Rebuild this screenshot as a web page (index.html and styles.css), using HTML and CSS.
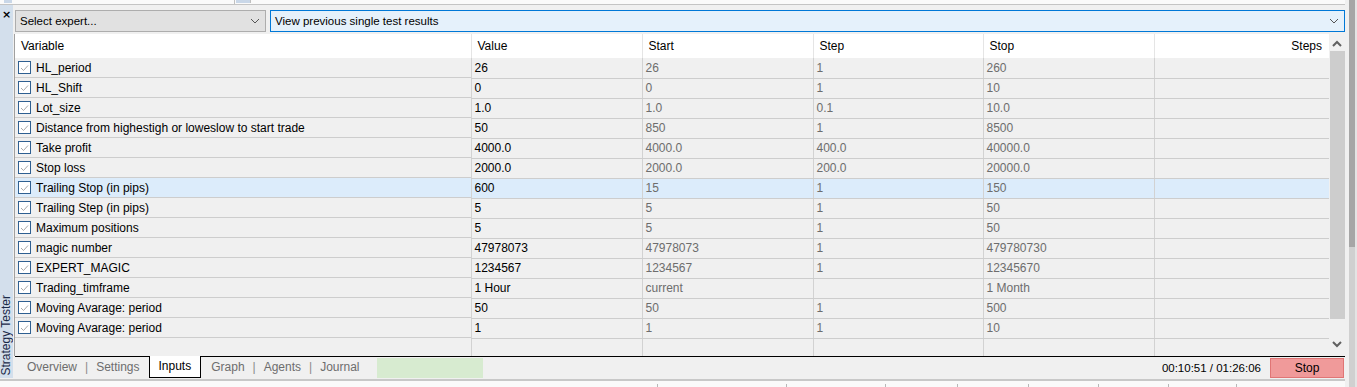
FILE: index.html
```html
<!DOCTYPE html>
<html lang="en">
<head>
    <meta charset="UTF-8">
    <title>Strategy Tester</title>
    <link rel="stylesheet" href="styles.css">
</head>
<body>
    <div class="app">
        <div class="top-strip">
            <span class="stub stub-a"></span>
            <span class="stub-gap"></span>
            <span class="stub stub-b"></span>
        </div>

        <div class="frame">
            <div class="sidebar">
                <span class="close">&times;</span>
                <span class="side-title">Strategy Tester</span>
            </div>

            <div class="panel">
                <div class="toolbar">
                    <div class="combo expert">
                        <span>Select expert...</span>
                        <svg class="chev" width="10" height="6" viewBox="0 0 10 6"><polyline points="1,1 5,5 9,1" fill="none" stroke="#555" stroke-width="1"/></svg>
                    </div>
                    <div class="combo mode">
                        <span>View previous single test results</span>
                        <svg class="chev" width="10" height="6" viewBox="0 0 10 6"><polyline points="1,1 5,5 9,1" fill="none" stroke="#555" stroke-width="1"/></svg>
                    </div>
                </div>

                <div class="grid-wrap">
                    <div class="grid">
                        <table class="inputs">
                            <colgroup>
                                <col style="width:456px">
                                <col style="width:171px">
                                <col style="width:171px">
                                <col style="width:170px">
                                <col style="width:171px">
                                <col style="width:175px">
                            </colgroup>
                            <thead>
                                <tr>
                                    <th>Variable</th>
                                    <th>Value</th>
                                    <th>Start</th>
                                    <th>Step</th>
                                    <th>Stop</th>
                                    <th class="right">Steps</th>
                                </tr>
                            </thead>
                            <tbody id="rows"></tbody>
                        </table>
                    </div>
                    <div class="vscroll">
                        <svg width="10" height="7" viewBox="0 0 10 7"><polyline points="1,6 5,2 9,6" fill="none" stroke="#606060" stroke-width="2"/></svg>
                        <div class="thumb"></div>
                        <svg width="10" height="7" viewBox="0 0 10 7"><polyline points="1,1 5,5 9,1" fill="none" stroke="#606060" stroke-width="2"/></svg>
                    </div>
                </div>

                <div class="tabbar">
                    <span class="tab">Overview</span>
                    <span class="sep">|</span>
                    <span class="tab">Settings</span>
                    <span class="tab active">Inputs</span>
                    <span class="tab">Graph</span>
                    <span class="sep">|</span>
                    <span class="tab">Agents</span>
                    <span class="sep">|</span>
                    <span class="tab">Journal</span>
                    <div class="progress"></div>
                    <span class="timer">00:10:51 / 01:26:06</span>
                    <button class="stop">Stop</button>
                </div>
            </div>
        </div>

        <div class="bottom-strip">
            <span style="width:657px"></span>
            <span style="width:128px"></span>
            <span style="width:98px"></span>
            <span style="width:71px"></span>
            <span style="width:70px"></span>
            <span style="width:69px"></span>
            <span style="width:69px"></span>
            <span style="width:67px"></span>
        </div>
    </div>
    <div class="outer-scroll"><div class="outer-thumb"></div></div>

    <script>
        const inputs = [
            ['HL_period', '26', '26', '1', '260'],
            ['HL_Shift', '0', '0', '1', '10'],
            ['Lot_size', '1.0', '1.0', '0.1', '10.0'],
            ['Distance from highestigh or loweslow to start trade', '50', '850', '1', '8500'],
            ['Take profit', '4000.0', '4000.0', '400.0', '40000.0'],
            ['Stop loss', '2000.0', '2000.0', '200.0', '20000.0'],
            ['Trailing Stop (in pips)', '600', '15', '1', '150'],
            ['Trailing Step (in pips)', '5', '5', '1', '50'],
            ['Maximum positions', '5', '5', '1', '50'],
            ['magic number', '47978073', '47978073', '1', '479780730'],
            ['EXPERT_MAGIC', '1234567', '1234567', '1', '12345670'],
            ['Trading_timframe', '1 Hour', 'current', '', '1 Month'],
            ['Moving Avarage: period', '50', '50', '1', '500'],
            ['Moving Avarage: period', '1', '1', '1', '10']
        ];

        const tick = '<svg class="tick" width="9" height="8" viewBox="0 0 9 8"><polyline points="1,4 3.5,6.5 8,1.5" fill="none" stroke="#a8a8a8" stroke-width="1"/></svg>';
        const body = document.getElementById('rows');

        inputs.forEach((row, i) => {
            const tr = document.createElement('tr');
            if (i === 6) tr.className = 'selected';
            tr.innerHTML =
                `<td class="name"><span class="check">${tick}</span>${row[0]}</td>` +
                `<td>${row[1]}</td>` +
                `<td class="dim">${row[2]}</td>` +
                `<td class="dim">${row[3]}</td>` +
                `<td class="dim">${row[4]}</td>` +
                `<td></td>`;
            body.appendChild(tr);
        });

        // empty space under the last row keeps the column lines
        const filler = document.createElement('tr');
        filler.className = 'filler';
        filler.innerHTML = '<td></td><td></td><td></td><td></td><td></td><td></td>';
        body.appendChild(filler);
    </script>
</body>
</html>
```

FILE: styles.css
```css
body {
    margin: 0;
    display: flex;
    height: 387px;
    overflow: hidden;
    background-color: #f0f0f0;
    font-family: "Liberation Sans", Arial, sans-serif;
    font-size: 12px;
    color: #000;
}
.app {
    width: 1345px;
    padding-right: 3px;
    display: flex;
    flex-direction: column;
}
.top-strip {
    height: 4px;
    border-bottom: 1px solid #c4c4c4;
    background-color: #fafafa;
    display: flex;
}
.stub {
    background-color: #c9d7e8;
    height: 3px;
}
.stub-a {
    width: 8px;
    margin-left: 4px;
}
.stub-gap {
    width: 222px;
    border-right: 1px solid #c0c0c0;
}
.stub-b {
    width: 14px;
    margin-left: 1px;
    border-right: 1px solid #c0c0c0;
}
.frame {
    display: flex;
    height: 373px;
}
.sidebar {
    width: 13px;
    margin-right: 1px;
    background-color: #d3dfec;
    display: flex;
    flex-direction: column;
    align-items: center;
    justify-content: space-between;
}
.close {
    font-family: "DejaVu Sans", sans-serif;
    font-weight: bold;
    font-size: 11px;
    line-height: 11px;
    margin-top: 4px;
}
.side-title {
    writing-mode: vertical-rl;
    transform: rotate(180deg);
    font-size: 12px;
    color: #1a2a48;
    margin-bottom: 3px;
    line-height: 13px;
}
.panel {
    flex: 1;
    display: flex;
    flex-direction: column;
}
.toolbar {
    display: flex;
    gap: 4px;
    padding: 5px 0 2px 1px;
}
.combo {
    height: 20px;
    display: flex;
    align-items: center;
    justify-content: space-between;
    padding: 0 5px 0 4px;
}
.combo span {
    font-size: 11.5px;
}
.expert {
    width: 240px;
    background-color: #e1e1e1;
    border: 1px solid #adadad;
}
.mode {
    flex: 1;
    background-color: #e5f1fb;
    border: 1px solid #0078d7;
}
.grid-wrap {
    display: flex;
    height: 322px;
    border-left: 1px solid #a0a0a0;
}
.grid {
    flex: 1;
    background-color: #f0f0f0;
}
.inputs {
    width: 1314px;
    table-layout: fixed;
    border-collapse: collapse;
}
.inputs th {
    height: 24px;
    padding: 0 0 0 6px;
    background-color: #fff;
    font-weight: normal;
    text-align: left;
    border-left: 1px solid #e5e5e5;
}
.inputs th:first-child {
    border-left: none;
}
.inputs th.right {
    text-align: right;
    padding-right: 7px;
}
.inputs td {
    height: 19px;
    padding: 0 0 0 3px;
    border-bottom: 1px solid #cdcdcd;
    border-left: 1px solid #d2d2d2;
    white-space: nowrap;
    overflow: hidden;
}
.inputs td:first-child {
    border-left: none;
}
.inputs td.name {
    padding-left: 3px;
    display: flex;
    align-items: center;
    height: 19px;
}
.inputs td.dim {
    color: #6d6d6d;
}
.inputs tr.selected td {
    background-color: #dcecfb;
}
.inputs tr.filler td {
    height: 18px;
    border-bottom: none;
}
.check {
    width: 11px;
    height: 11px;
    border: 1px solid #2e5f91;
    background-color: #fff;
    margin-right: 5px;
    display: flex;
    align-items: center;
    justify-content: center;
}
.vscroll {
    width: 16px;
    background-color: #f0f0f0;
    display: flex;
    flex-direction: column;
    align-items: center;
    padding-top: 6px;
}
.thumb {
    width: 15px;
    height: 268px;
    margin: 4px 0 22px;
    background-color: #cdcdcd;
}
.tabbar {
    height: 21px;
    border-top: 1px solid #000;
    margin-left: 1px;
    display: flex;
    align-items: stretch;
    color: #6d6d6d;
}
.tab {
    display: flex;
    align-items: center;
    padding: 0 5px 2px;
}
.tab:first-child {
    margin-left: 7px;
}
.sep {
    display: flex;
    align-items: center;
    padding: 0 3px 2px;
    color: #8a8a8a;
}
.tab.active {
    background-color: #fff;
    color: #000;
    border: 1px solid #000;
    border-top: none;
    padding: 0 9px 2px;
    margin: -1px 5px 0 4px;
}
.progress {
    width: 106px;
    margin: 1px 0 0 12px;
    background-color: #d7ebd0;
}
.timer {
    margin-left: auto;
    display: flex;
    align-items: center;
    color: #000;
    padding-right: 9px;
    font-size: 11.5px;
}
.stop {
    width: 74px;
    margin: 1px 1px 0 0;
    background-color: #f09a9a;
    border: 1px solid #e07575;
    font-family: inherit;
    font-size: 12px;
    color: #000;
    padding: 0;
}
.bottom-strip {
    flex: 1;
    border-top: 2px solid #c8c8c8;
    margin-top: 1px;
    background-color: #fafafa;
    display: flex;
    align-items: flex-end;
}
.bottom-strip span {
    height: 3px;
    border-right: 1px solid #b8b8b8;
}
.outer-scroll {
    width: 6px;
    margin-left: 1px;
    background-color: #d0d0d0;
    border-right: 2px solid #e4e4e4;
}
.outer-thumb {
    height: 247px;
    background-color: #a6a6a6;
}
```
